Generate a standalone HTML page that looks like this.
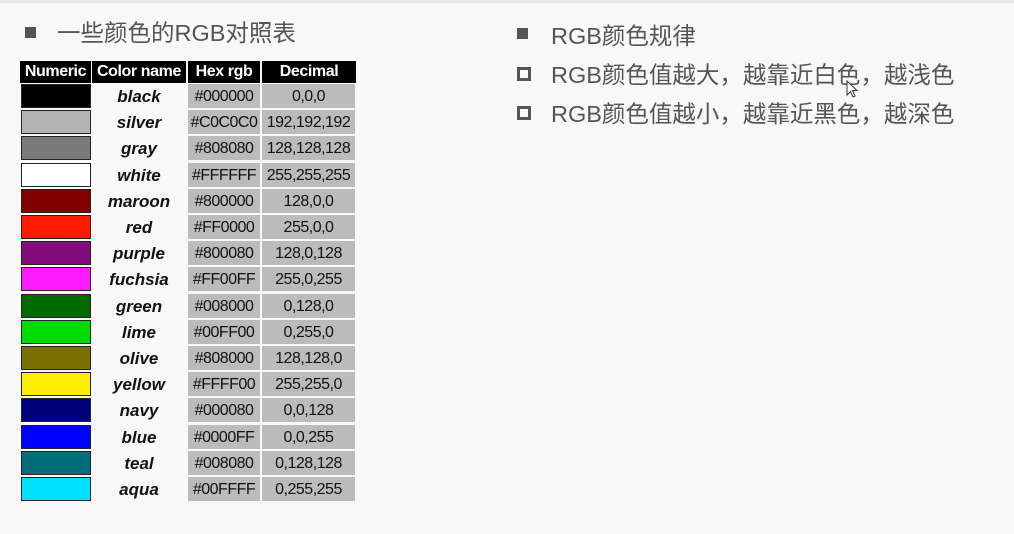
<!DOCTYPE html>
<html><head><meta charset="utf-8"><style>
body{margin:0;width:1014px;height:534px;background:#f8f8f8;position:relative;overflow:hidden;font-family:"Liberation Sans","Noto Sans CJK SC",sans-serif}
.top{position:absolute;left:0;top:0;width:1014px;height:3px;background:#e6e6e6}
.t{position:absolute;color:#555;font-size:23.5px;white-space:nowrap;line-height:26px}
.b{position:absolute;width:11px;height:11px;background:#555}
.o{position:absolute;width:8px;height:8px;border:3px solid #555}
.h{position:absolute;top:61px;height:22px;background:#000;color:#fff;font-weight:bold;font-size:16px;line-height:22px;text-align:center;white-space:nowrap;overflow:hidden;letter-spacing:-0.4px}
.r{position:absolute;left:0;width:1014px;height:25px}
.sw{position:absolute;left:21px;width:68px;height:22px;border:1px solid #222;top:0}
.n{position:absolute;left:91px;width:96px;text-align:center;font-style:italic;font-weight:bold;font-size:17px;line-height:26px;color:#111}
.x{position:absolute;left:188px;width:72px;height:24px;background:#bbb;font-size:16px;line-height:26px;text-align:center;color:#111;white-space:nowrap;overflow:hidden;letter-spacing:-0.5px}
.d{position:absolute;left:262px;width:93px;height:24px;background:#bbb;font-size:16px;line-height:26px;text-align:center;color:#111;white-space:nowrap;letter-spacing:-0.5px}
</style></head><body>
<div class="top"></div>
<div class="b" style="left:25px;top:27px"></div>
<div class="t" style="left:57px;top:20px">一些颜色的RGB对照表</div>
<div class="b" style="left:517px;top:28px"></div>
<div class="t" style="left:551px;top:23px">RGB颜色规律</div>
<div class="o" style="left:517px;top:67px"></div>
<div class="t" style="left:551px;top:62px">RGB颜色值越大，越靠近白色，越浅色</div>
<div class="o" style="left:517px;top:106px"></div>
<div class="t" style="left:551px;top:101px">RGB颜色值越小，越靠近黑色，越深色</div>
<svg style="position:absolute;left:846px;top:80px" width="14" height="20"><path d="M1 1 L1 15 L4.5 11.5 L7 17 L9 16 L6.5 10.5 L11 10.5 Z" fill="#fff" stroke="#333" stroke-width="1"/></svg>
<div class="h" style="left:20px;width:71px">Numeric</div>
<div class="h" style="left:92px;width:94px">Color name</div>
<div class="h" style="left:188px;width:72px">Hex rgb</div>
<div class="h" style="left:262px;width:94px">Decimal</div>
<div id="rows"></div>
<script>
var d=[["black","#000000","0,0,0","#000"],["silver","#C0C0C0","192,192,192","#b4b4b4"],["gray","#808080","128,128,128","#7a7a7a"],["white","#FFFFFF","255,255,255","#fff"],["maroon","#800000","128,0,0","#820000"],["red","#FF0000","255,0,0","#ff1a00"],["purple","#800080","128,0,128","#820c7e"],["fuchsia","#FF00FF","255,0,255","#ff1dff"],["green","#008000","0,128,0","#006a00"],["lime","#00FF00","0,255,0","#00dc00"],["olive","#808000","128,128,0","#7a7000"],["yellow","#FFFF00","255,255,0","#ffee00"],["navy","#000080","0,0,128","#00007a"],["blue","#0000FF","0,0,255","#0000ff"],["teal","#008080","0,128,128","#006e7a"],["aqua","#00FFFF","0,255,255","#00e0ff"]];
var h="";d.forEach(function(r,i){var t=(84+i*26.2).toFixed(1);h+='<div class="r" style="top:'+t+'px"><div class="sw" style="background:'+r[3]+'"></div><div class="n">'+r[0]+'</div><div class="x">'+r[1]+'</div><div class="d">'+r[2]+'</div></div>';});
document.getElementById("rows").innerHTML=h;
</script>
</body></html>
